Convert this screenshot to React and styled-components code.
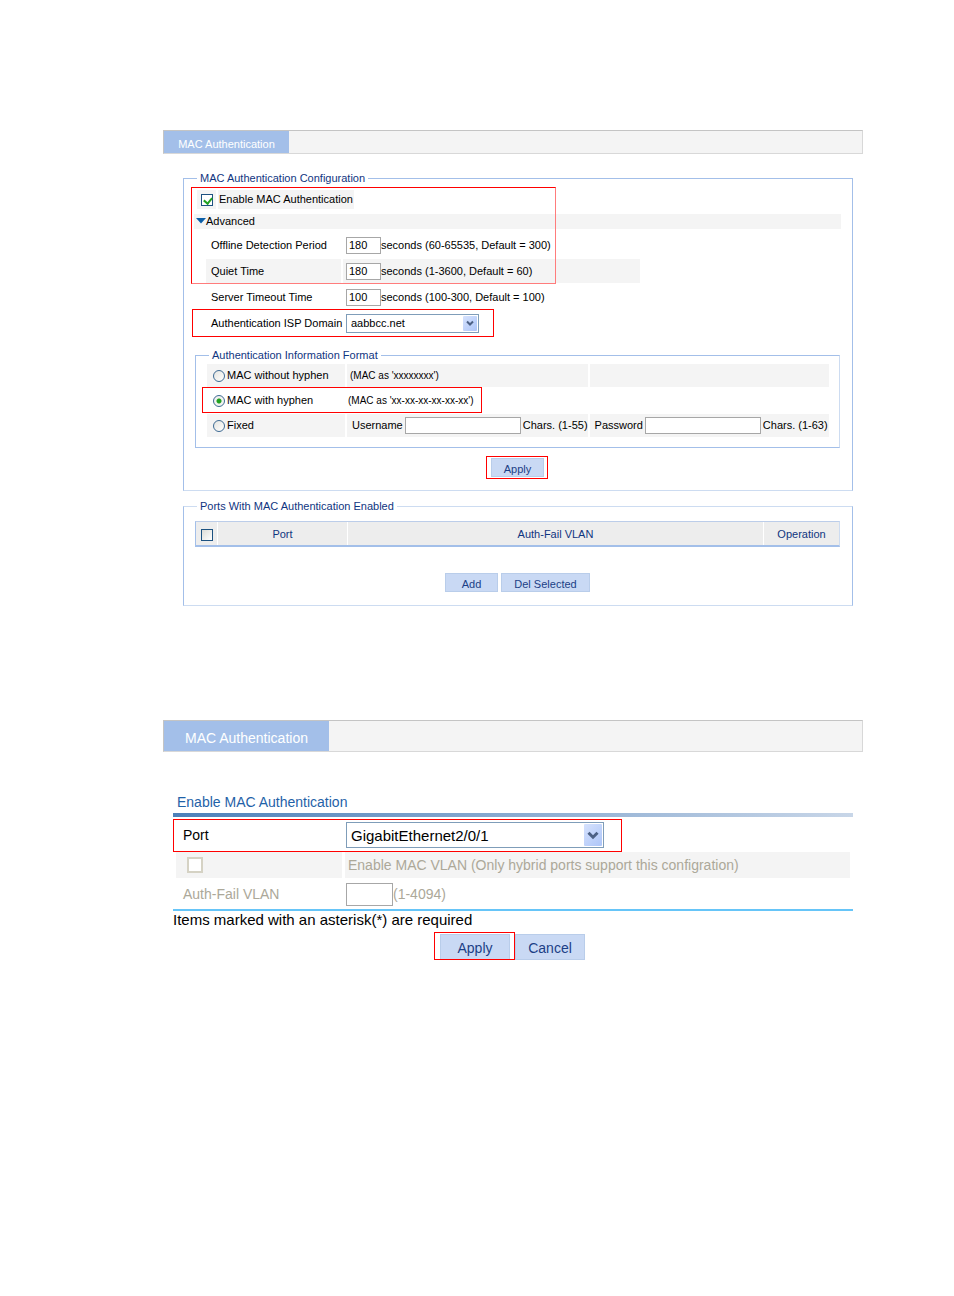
import styled, { createGlobalStyle, css } from 'styled-components';

const GlobalStyle = createGlobalStyle`
  * {
    box-sizing: border-box;
  }

  body {
    margin: 0;
    background-color: #fff;
    color: #000;
    font-family: 'Liberation Sans', Arial, sans-serif;
    font-size: 11px;
    line-height: 13px;
  }

  button,
  input,
  select {
    margin: 0;
    font-family: inherit;
    font-size: inherit;
    color: inherit;
  }
`;

const Page = styled.main`
  padding: 130px 91px 40px 163px;
`;

const TabBar = styled.nav`
  display: flex;
  height: ${({ $large }) => ($large ? 32 : 24)}px;
  background-color: #f4f4f4;
  border: 1px solid #d8d8d8;
  border-top-color: #c4c4c4;
  border-left-color: #c4c4c4;
  font-size: ${({ $large }) => ($large ? 14 : 11)}px;
`;

const Tab = styled.a`
  display: flex;
  align-items: center;
  justify-content: center;
  width: ${({ $large }) => ($large ? 165 : 125)}px;
  padding-top: 4px;
  background-color: #a3bfe9;
  color: #fff;
  text-decoration: none;
`;

const Section = styled.section`
  position: relative;
  margin: ${({ $top }) => $top}px 10px 0 20px;
`;

const Fieldset = styled.fieldset`
  min-width: 0;
  margin: 0;
  padding: 0;
  border: 1px solid #a3bfe9;
  border-top-color: ${({ $soft }) => ($soft ? '#cddcf1' : '#a3bfe9')};
  border-bottom-color: #cddcf1;
`;

const InnerFieldset = styled(Fieldset)`
  position: relative;
  margin: 14px 12px 0 11px;
  border-right-color: #cddcf1;
  border-bottom-color: #a3bfe9;
`;

const Legend = styled.legend`
  margin-left: 13px;
  padding: 0 3px;
  color: #10357f;
`;

const EnableRow = styled.div`
  display: flex;
  gap: 2px;
  height: 19px;
  margin: 5px 0 0 13px;
`;

const EnableCell = styled.div`
  display: flex;
  align-items: center;
  padding: 0 1px 0 ${({ $check }) => ($check ? 4 : 1)}px;
  width: ${({ $check }) => ($check ? '19px' : 'auto')};
  background-color: #f4f4f4;
`;

const Advanced = styled.div`
  display: flex;
  align-items: center;
  height: 15px;
  margin: 5px 11px 0 10px;
  padding-left: 2px;
  background-color: #f4f4f4;
`;

const SettingsGrid = styled.div`
  display: grid;
  grid-template-columns: 135px minmax(0, 297px);
  grid-auto-rows: 24px;
  gap: 2px;
  margin: 4px 0 0 22px;
`;

const FormatGrid = styled.div`
  display: grid;
  grid-template-columns: 138px 1fr 1fr;
  grid-auto-rows: 23px;
  gap: 2px;
  margin: 2px 10px 10px 11px;
`;

const PortGrid = styled.div`
  display: grid;
  grid-template-columns: 166px 1fr;
  grid-template-rows: 30px 26px 28px;
  gap: 2px 3px;
  margin: 3px 3px 1px;
`;

const Cell = styled.div`
  display: flex;
  align-items: center;
  gap: ${({ $gap }) => $gap || 0}px;
  padding-left: ${({ $pad }) => $pad || 0}px;
  background-color: ${({ $shaded }) => ($shaded ? '#f4f4f4' : 'transparent')};
  color: ${({ $disabled }) => ($disabled ? '#aca899' : 'inherit')};
  white-space: nowrap;
`;

const Hint = styled.span`
  font-size: 10px;
`;

const TextInput = styled.input`
  width: ${({ $width }) => $width}px;
  height: ${({ $height }) => $height || 17}px;
  padding: 0 2px;
  border: 1px solid #a7a7a7;
  border-radius: 0;
  background-color: #fff;
`;

const Checkbox = styled.input`
  appearance: none;
  position: relative;
  flex: none;
  width: ${({ $size }) => $size || 12}px;
  height: ${({ $size }) => $size || 12}px;
  border: 1px solid #1d5281;
  background: linear-gradient(135deg, #dcdcd7, #fff);

  &:checked {
    background: #fff;
  }

  &:checked::after {
    content: '';
    position: absolute;
    top: 1px;
    left: 3px;
    width: 4px;
    height: 6px;
    border: solid #21a121;
    border-width: 0 2px 2px 0;
    transform: rotate(40deg);
  }

  &:disabled {
    border: 2px solid #d5d2c4;
    background: #fff;
  }
`;

const Radio = styled.input`
  appearance: none;
  flex: none;
  width: 12px;
  height: 12px;
  border: 1px solid #3d6a93;
  border-radius: 50%;
  background: linear-gradient(135deg, #e4e4e0, #fff);

  &:checked {
    background: radial-gradient(circle, #21a121 0 2px, #f2f2f0 3px);
  }
`;

const SelectWrap = styled.div`
  position: relative;
  width: ${({ $large }) => ($large ? 258 : 133)}px;
  height: ${({ $large }) => ($large ? 26 : 19)}px;
  font-size: ${({ $large }) => ($large ? 15 : 11)}px;
`;

const Select = styled.select`
  appearance: none;
  width: 100%;
  height: 100%;
  padding: 0 20px 0 4px;
  border: 1px solid #7f9db9;
  border-radius: 0;
  background-color: #fff;
`;

const SelectArrow = styled.span`
  position: absolute;
  top: 2px;
  right: 2px;
  bottom: 2px;
  display: flex;
  align-items: center;
  justify-content: center;
  width: ${({ $large }) => ($large ? 18 : 14)}px;
  border-radius: 1px;
  background: linear-gradient(135deg, #d6e2fd, #adc5f8);
  pointer-events: none;
`;

const ButtonRow = styled.div`
  display: flex;
  justify-content: center;
  gap: ${({ $gap }) => $gap || 3}px;
  margin-top: ${({ $top }) => $top}px;
  padding: 0 1px 13px 0;
`;

const Button = styled.button`
  width: ${({ $width }) => $width || 53}px;
  height: ${({ $large }) => ($large ? 26 : 19)}px;
  padding: 2px 0 0;
  border: 1px solid #b9cdea;
  border-radius: 0;
  background-color: #c9d9f4;
  color: #1c3f86;
`;

const outline = css`
  position: absolute;
  border: 1px solid #f00;
  pointer-events: none;
`;

const Marker = styled.span`
  ${outline}
  top: ${({ $top }) => $top}px;
  left: ${({ $left }) => $left}px;
  width: ${({ $width }) => $width}px;
  height: ${({ $height }) => $height}px;
  ${({ $fade }) =>
    $fade &&
    css`
      border-right-color: #ff7c7c;
      border-bottom-color: #ff7c7c;
    `}
`;

const MarkedButton = styled.div`
  position: relative;

  &::after {
    content: '';
    ${outline}
    inset: ${({ $inset }) => $inset};
  }
`;

const PortsTable = styled.table`
  width: calc(100% - 23px);
  height: 26px;
  margin: 8px 12px 0 11px;
  border: 1px solid #cddcf1;
  border-top-color: #bccde9;
  border-left-color: #a3bfe9;
  border-bottom: 2px solid #a3bfe9;
  border-spacing: 0;
  table-layout: fixed;
  background-color: #ededed;
  color: #10357f;
`;

const HeadCell = styled.th`
  width: ${({ $width }) => ($width ? `${$width}px` : 'auto')};
  padding: ${({ $check }) => ($check ? '3px 0 0 5px' : '2px 0 0')};
  border-left: ${({ $check }) => ($check ? '0' : '1px solid #fff')};
  font-weight: normal;
  text-align: center;

  ${Checkbox} {
    display: block;
  }
`;

const PortSection = styled.section`
  position: relative;
  margin: 42px 10px 0;
  font-size: 14px;
  line-height: 16px;
`;

const Title = styled.h2`
  margin: 0;
  padding: 0 0 3px 4px;
  color: #1f62a8;
  font-size: 14px;
  font-weight: normal;
`;

const TitleRule = styled.div`
  height: 4px;
  background: linear-gradient(to right, #4d80b9, #c8d6e8);
`;

const Note = styled.p`
  margin: 0;
  padding-top: 1px;
  border-top: 2px solid #66c5f8;
  font-size: 15px;
`;

const Chevron = ({ size }) => (
  <svg width={size} height={size} viewBox="0 0 8 8" fill="none">
    <path d="M1 2.5 4 5.5 7 2.5" stroke="#4d6185" strokeWidth="2" />
  </svg>
);

const Dropdown = ({ id, value, large }) => (
  <SelectWrap $large={large}>
    <Select id={id} defaultValue={value}>
      <option>{value}</option>
    </Select>
    <SelectArrow $large={large}>
      <Chevron size={large ? 12 : 8} />
    </SelectArrow>
  </SelectWrap>
);

const timers = [
  { id: 'offline', label: 'Offline Detection Period', value: '180', unit: 'seconds (60-65535, Default = 300)' },
  { id: 'quiet', label: 'Quiet Time', value: '180', unit: 'seconds (1-3600, Default = 60)', shaded: true },
  { id: 'server', label: 'Server Timeout Time', value: '100', unit: 'seconds (100-300, Default = 100)' },
];

const TimerRow = ({ timer }) => (
  <>
    <Cell $pad={5} $shaded={timer.shaded}>
      <label htmlFor={timer.id}>{timer.label}</label>
    </Cell>
    <Cell $pad={3} $shaded={timer.shaded}>
      <TextInput id={timer.id} $width={35} defaultValue={timer.value} />
      {timer.unit}
    </Cell>
  </>
);

const Configuration = () => (
  <Section $top={18}>
    <Fieldset>
      <Legend>MAC Authentication Configuration</Legend>
      <EnableRow>
        <EnableCell $check>
          <Checkbox type="checkbox" id="enable" defaultChecked />
        </EnableCell>
        <EnableCell>
          <label htmlFor="enable">Enable MAC Authentication</label>
        </EnableCell>
      </EnableRow>
      <Advanced>
        <svg width="10" height="7" viewBox="0 0 10 7">
          <path d="M0 0h10L5 5.5z" fill="#0a5ea8" />
        </svg>
        Advanced
      </Advanced>
      <SettingsGrid>
        {timers.map((timer) => (
          <TimerRow key={timer.id} timer={timer} />
        ))}
        <Cell $pad={5}>
          <label htmlFor="domain">Authentication ISP Domain</label>
        </Cell>
        <Cell $pad={3}>
          <Dropdown id="domain" value="aabbcc.net" />
        </Cell>
      </SettingsGrid>
      <InnerFieldset>
        <Legend>Authentication Information Format</Legend>
        <FormatGrid>
          <Cell $pad={6} $gap={2} $shaded>
            <Radio type="radio" name="format" id="plain" />
            <label htmlFor="plain">MAC without hyphen</label>
          </Cell>
          <Cell $pad={3} $shaded>
            <Hint>(MAC as 'xxxxxxxx')</Hint>
          </Cell>
          <Cell $shaded />
          <Cell $pad={6} $gap={2}>
            <Radio type="radio" name="format" id="hyphen" defaultChecked />
            <label htmlFor="hyphen">MAC with hyphen</label>
          </Cell>
          <Cell $pad={1}>
            <Hint>(MAC as 'xx-xx-xx-xx-xx-xx')</Hint>
          </Cell>
          <Cell />
          <Cell $pad={6} $gap={2} $shaded>
            <Radio type="radio" name="format" id="fixed" />
            <label htmlFor="fixed">Fixed</label>
          </Cell>
          <Cell $pad={5} $gap={2} $shaded>
            <label htmlFor="username">Username</label>
            <TextInput id="username" $width={116} />
            Chars. (1-55)
          </Cell>
          <Cell $pad={5} $gap={2} $shaded>
            <label htmlFor="password">Password</label>
            <TextInput id="password" type="password" $width={116} />
            Chars. (1-63)
          </Cell>
        </FormatGrid>
      </InnerFieldset>
      <ButtonRow $top={10}>
        <MarkedButton $inset="-2px -4px -2px -5px">
          <Button type="button">Apply</Button>
        </MarkedButton>
      </ButtonRow>
    </Fieldset>
    <Marker $top={15} $left={8} $width={365} $height={97} $fade />
    <Marker $top={137} $left={9} $width={302} $height={28} />
    <Marker $top={215} $left={19} $width={280} $height={26} />
  </Section>
);

const Ports = () => (
  <Section $top={9}>
    <Fieldset $soft>
      <Legend>Ports With MAC Authentication Enabled</Legend>
      <PortsTable>
        <thead>
          <tr>
            <HeadCell $width={21} $check>
              <Checkbox type="checkbox" aria-label="Select all ports" />
            </HeadCell>
            <HeadCell $width={130}>Port</HeadCell>
            <HeadCell>Auth-Fail VLAN</HeadCell>
            <HeadCell $width={76}>Operation</HeadCell>
          </tr>
        </thead>
      </PortsTable>
      <ButtonRow $top={26}>
        <Button type="button">Add</Button>
        <Button type="button" $width={89}>
          Del Selected
        </Button>
      </ButtonRow>
    </Fieldset>
  </Section>
);

const EnablePort = () => (
  <PortSection>
    <Title>Enable MAC Authentication</Title>
    <TitleRule />
    <PortGrid>
      <Cell $pad={7}>
        <label htmlFor="port">Port</label>
      </Cell>
      <Cell $pad={1}>
        <Dropdown id="port" value="GigabitEthernet2/0/1" large />
      </Cell>
      <Cell $pad={11} $shaded $disabled>
        <Checkbox type="checkbox" id="macvlan" $size={16} disabled />
      </Cell>
      <Cell $pad={3} $shaded $disabled>
        <label htmlFor="macvlan">Enable MAC VLAN (Only hybrid ports support this configration)</label>
      </Cell>
      <Cell $pad={7} $disabled>
        <label htmlFor="authfail">Auth-Fail VLAN</label>
      </Cell>
      <Cell $pad={1} $disabled>
        <TextInput id="authfail" $width={47} $height={23} disabled />
        (1-4094)
      </Cell>
    </PortGrid>
    <Note>Items marked with an asterisk(*) are required</Note>
    <ButtonRow $top={6} $gap={5}>
      <MarkedButton $inset="-2px -5px 0 -6px">
        <Button type="button" $width={70} $large>
          Apply
        </Button>
      </MarkedButton>
      <Button type="button" $width={70} $large>
        Cancel
      </Button>
    </ButtonRow>
    <Marker $top={25} $left={0} $width={449} $height={33} />
  </PortSection>
);

const SecondPage = styled.div`
  margin-top: 114px;
`;

const App = () => {
  return (
    <>
      <GlobalStyle />
      <Page>
        <TabBar>
          <Tab href="#config">MAC Authentication</Tab>
        </TabBar>
        <Configuration />
        <Ports />
        <SecondPage>
          <TabBar $large>
            <Tab href="#port" $large>
              MAC Authentication
            </Tab>
          </TabBar>
          <EnablePort />
        </SecondPage>
      </Page>
    </>
  );
};

export default App;
